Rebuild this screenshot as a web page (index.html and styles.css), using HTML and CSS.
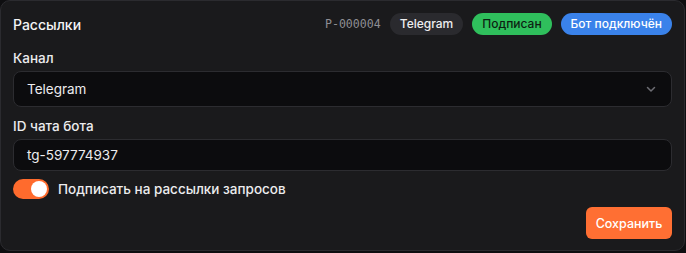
FILE: index.html
```html
<!DOCTYPE html>
<html lang="ru">
<head>
<meta charset="utf-8">
<link rel="stylesheet" href="styles.css">
</head>
<body>
<div class="card">
  <div class="header">
    <div class="title">Рассылки</div>
    <div class="meta">
      <span class="code">P-000004</span>
      <span class="pill pill-gray">Telegram</span>
      <span class="pill pill-green">Подписан</span>
      <span class="pill pill-blue">Бот подключён</span>
    </div>
  </div>
  <div class="field">
    <label class="label">Канал</label>
    <div class="select">
      <span>Telegram</span>
      <svg class="chev" width="12" height="12" viewBox="0 0 12 12"><path d="M2.5 4.5 L6 8 L9.5 4.5" fill="none" stroke="#6d6d73" stroke-width="1.5" stroke-linecap="round" stroke-linejoin="round"/></svg>
    </div>
  </div>
  <div class="field field-2">
    <label class="label">ID чата бота</label>
    <div class="input">tg-597774937</div>
  </div>
  <div class="toggle-row">
    <span class="toggle"><span class="knob"></span></span>
    <span class="toggle-label">Подписать на рассылки запросов</span>
  </div>
  <div class="actions">
    <button class="btn">Сохранить</button>
  </div>
</div>
</body>
</html>
```
FILE: styles.css
```css
* { box-sizing: border-box; }
html, body { margin: 0; padding: 0; background: #0e0e10; }
body {
  font-family: Inter, "Noto Sans", sans-serif;
  color: #f2f2f3;
  width: 686px;
  height: 253px;
}
.card {
  width: 685px;
  height: 251px;
  background: #1a1a1c;
  border: 1px solid #2b2b2f;
  border-radius: 10px;
  padding: 12px 12px 12px 12px;
}
.header {
  display: flex;
  align-items: center;
  justify-content: space-between;
  height: 22px;
}
.title {
  font-size: 14px;
  font-weight: 500;
  color: #f4f4f5;
}
.meta {
  display: flex;
  align-items: center;
  gap: 9px;
}
.code {
  font-family: "DejaVu Sans Mono", "Liberation Mono", monospace;
  font-size: 11.6px;
  color: #8e8e93;
}
.pill {
  height: 22px;
  line-height: 22px;
  padding: 0 10px;
  border-radius: 11px;
  font-size: 12px;
  font-weight: 500;
}
.pill-gray { background: #2a2a2e; color: #eeeef0; }
.pill-green { background: #2fbf5c; color: #0d1f13; }
.pill-blue { background: #3a82ea; color: #ffffff; }
.field { margin-top: 14px; }
.field-2 { margin-top: 10px; }
.label {
  display: block;
  font-size: 13.5px;
  line-height: 18px;
  font-weight: 500;
  color: #ececee;
  margin-bottom: 4px;
}
.select, .input {
  display: flex;
  align-items: center;
  background: #0c0c0e;
  border: 1px solid #2c2c30;
  border-radius: 8px;
  padding: 0 13px;
  font-size: 13.5px;
  color: #ededef;
}
.select {
  height: 36px;
  justify-content: space-between;
  padding-right: 14px;
}
.input { height: 32px; }
.chev { display: block; }
.toggle-row {
  display: flex;
  align-items: center;
  gap: 9px;
  margin-top: 8px;
  height: 20px;
}
.toggle {
  width: 36px;
  height: 20px;
  border-radius: 10px;
  background: #ff6b2d;
  display: flex;
  align-items: center;
  justify-content: flex-end;
  padding: 0 2px;
}
.knob {
  width: 16px;
  height: 16px;
  border-radius: 50%;
  background: #ffffff;
}
.toggle-label {
  font-size: 13.5px;
  font-weight: 500;
  color: #ececee;
}
.actions {
  display: flex;
  justify-content: flex-end;
  margin-top: 8px;
}
.btn {
  font-family: Inter, "Noto Sans", sans-serif;
  height: 32px;
  width: 86px;
  border: none;
  border-radius: 6px;
  background: #ff6f33;
  color: #ffffff;
  font-size: 12.5px;
  font-weight: 500;
  padding: 0;
}
```
